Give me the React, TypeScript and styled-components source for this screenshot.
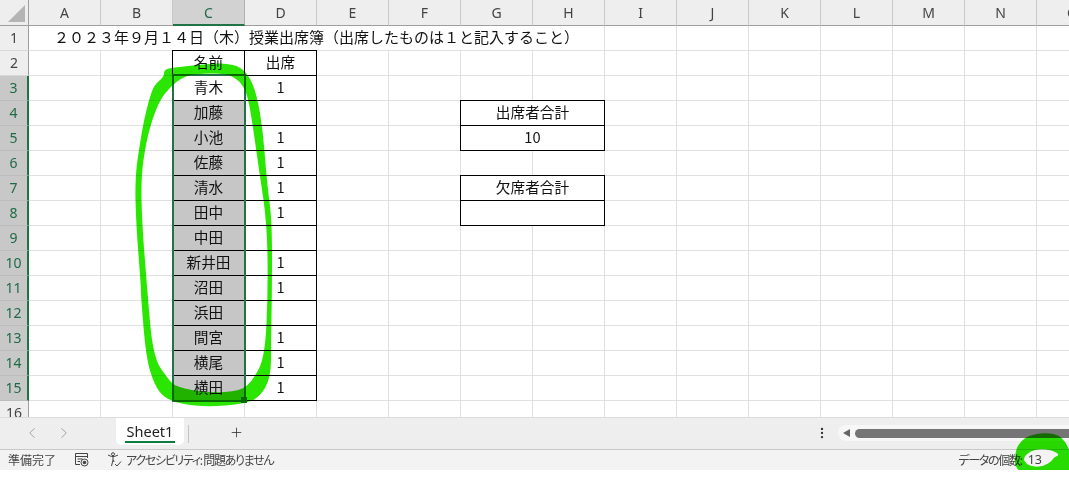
import React from 'react';
import { ChevronLeft, ChevronRight, EllipsisVertical, Plus } from 'lucide-react';
import styled, { createGlobalStyle } from 'styled-components';

const COLUMNS = 'ABCDEFGHIJKLMNO'.split('');
const ROWS = Array.from({ length: 16 }, (_, i) => i + 1);

// row number -> [name, attendance]
const ROSTER: Record<number, [string, string]> = {
  2: ['名前', '出席'],
  3: ['青木', '1'],
  4: ['加藤', ''],
  5: ['小池', '1'],
  6: ['佐藤', '1'],
  7: ['清水', '1'],
  8: ['田中', '1'],
  9: ['中田', ''],
  10: ['新井田', '1'],
  11: ['沼田', '1'],
  12: ['浜田', ''],
  13: ['間宮', '1'],
  14: ['横尾', '1'],
  15: ['横田', '1'],
};

// row number -> text of the merged G:H cell
const TOTALS: Record<number, string> = {
  4: '出席者合計',
  5: '10',
  7: '欠席者合計',
  8: '',
};

const TITLE =
  '２０２３年９月１４日（木）授業出席簿（出席したものは１と記入すること）';

type Point = [number, number];

// outline of the hand drawn circle, traced from the screenshot
const CIRCLE_OUTER: Point[] = [
  [164, 69], [178, 67], [208, 64], [225, 63], [241, 67], [251, 79], [258, 100],
  [263, 133], [266, 170], [268, 190], [272, 223], [272, 290], [271, 340],
  [271, 378], [259, 398], [242, 404], [208, 407], [182, 404], [164, 398],
  [154, 384], [146, 357], [141, 297], [141, 287], [136, 223], [135, 177],
  [140, 143], [144, 120], [149, 100], [154, 85], [164, 77],
];
const CIRCLE_INNER: Point[] = [
  [170, 87], [183, 77], [195, 74], [225, 73], [239, 80], [247, 93], [252, 120],
  [259, 170], [267, 223], [268, 290], [265, 357], [253, 380], [241, 391],
  [208, 393], [176, 387], [168, 379], [153, 357], [147, 287], [142, 223],
  [141, 177], [146, 143], [152, 120], [160, 100],
];
const BLOB_OUTER: Point[] = [
  [1015, 475], [1015, 450], [1022, 440], [1030, 435], [1043, 433], [1057, 434],
  [1066, 442], [1071, 455], [1071, 475],
];
const BLOB_INNER: Point[] = [
  [1023, 458], [1030, 451], [1040, 449], [1052, 450], [1060, 455], [1054, 457],
  [1052, 461], [1044, 466], [1034, 467], [1026, 464],
];

const smoothPath = (points: Point[]) => {
  const mid = (a: Point, b: Point) => `${(a[0] + b[0]) / 2} ${(a[1] + b[1]) / 2}`;
  const last = points[points.length - 1];
  let d = `M${mid(last, points[0])}`;
  points.forEach((p, i) => {
    d += ` Q${p[0]} ${p[1]} ${mid(p, points[(i + 1) % points.length])}`;
  });
  return `${d} Z`;
};

const Marker = () => (
  <MarkerLayer viewBox="0 0 1069 481">
    <defs>
      <clipPath id="status-edge">
        <rect x="0" y="0" width="1069" height="470" />
      </clipPath>
    </defs>
    <path
      fillRule="evenodd"
      fill="#2ae600"
      d={`${smoothPath(CIRCLE_OUTER)} ${smoothPath(CIRCLE_INNER)}`}
    />
    <path
      fillRule="evenodd"
      fill="#2ae600"
      clipPath="url(#status-edge)"
      d={`${smoothPath(BLOB_OUTER)} ${smoothPath(BLOB_INNER)}`}
    />
  </MarkerLayer>
);

const MacroIcon = () => (
  <StatusIcon width="15" height="15" viewBox="0 0 15 15">
    <path
      d="M6 12.5H1.5V1.5h12V6M1.5 4.5h12M3.5 7h5M3.5 9.5h2.500"
      fill="none"
      stroke="#444"
    />
    <circle cx="10.500" cy="10.500" r="3.500" fill="none" stroke="#444" />
    <circle cx="10.500" cy="10.500" r="1.800" fill="#444" />
  </StatusIcon>
);

const AccessibilityIcon = () => (
  <StatusIcon width="15" height="16" viewBox="0 0 15 16">
    <path
      d="M1 3l3.500 1.500h3L11 3M6 4.500V8L4.500 14M6.500 8l.5 2"
      fill="none"
      stroke="#444"
    />
    <circle cx="6" cy="2.200" r="1.500" fill="none" stroke="#444" />
    <path d="M8 12l2 2 4-4.500" fill="none" stroke="#444" />
  </StatusIcon>
);

const SheetRow = ({ row }: { row: number }) => {
  const isSelected = row >= 3 && row <= 15;

  if (row === 1) {
    return (
      <>
        <RowHeader $selected={false}>1</RowHeader>
        <TitleCell>{TITLE}</TitleCell>
        {COLUMNS.slice(8).map((col) => (
          <Cell key={col} />
        ))}
      </>
    );
  }

  return (
    <>
      <RowHeader $selected={isSelected}>{row}</RowHeader>
      {COLUMNS.map((col) => {
        if (col === 'C' || col === 'D') {
          const entry = ROSTER[row];
          const text = entry ? entry[col === 'C' ? 0 : 1] : '';
          return (
            <Cell
              key={col}
              $boxed={!!entry}
              $shaded={col === 'C' && row >= 4 && row <= 15}
            >
              {text}
            </Cell>
          );
        }
        if (col === 'G' && row in TOTALS) {
          return (
            <Cell key={col} $boxed $span={2}>
              {TOTALS[row]}
            </Cell>
          );
        }
        if (col === 'H' && row in TOTALS) return null;
        return <Cell key={col} />;
      })}
    </>
  );
};

export default function App() {
  return (
    <Page>
      <GlobalStyle />
      <Sheet>
        <Grid>
          <Corner>
            <CornerMark />
          </Corner>
          {COLUMNS.map((col) => (
            <ColumnHeader key={col} $selected={col === 'C'}>
              {col}
            </ColumnHeader>
          ))}
          {ROWS.map((row) => (
            <SheetRow key={row} row={row} />
          ))}
        </Grid>
        <Selection>
          <FillHandle />
        </Selection>
      </Sheet>
      <TabBar>
        <TabNav>
          <ChevronLeft size={18} strokeWidth={1.2} />
          <ChevronRight size={18} strokeWidth={1.2} />
        </TabNav>
        <ActiveTab>
          <TabLabel>Sheet1</TabLabel>
        </ActiveTab>
        <TabDivider />
        <AddSheet>
          <Plus size={15} strokeWidth={1.3} />
        </AddSheet>
        <ScrollArea>
          <EllipsisVertical size={14} color="#333" />
          <ScrollTrack>
            <ScrollArrow />
            <ScrollThumb />
          </ScrollTrack>
        </ScrollArea>
      </TabBar>
      <StatusBar>
        <span>準備完了</span>
        <MacroIcon />
        <AccessibilityItem>
          <AccessibilityIcon />
          <CondensedText>アクセシビリティ: 問題ありません</CondensedText>
        </AccessibilityItem>
        <StatusSummary>
          <CondensedText>データの個数:</CondensedText>
          <SummaryValue>13</SummaryValue>
        </StatusSummary>
      </StatusBar>
      <Marker />
    </Page>
  );
}

const GlobalStyle = createGlobalStyle`
  html, body {
    margin: 0;
    background: #fff;
    overflow: hidden;
  }
`;

const Page = styled.div`
  position: relative;
  width: 1069px;
  height: 481px;
  overflow: hidden;
  display: flex;
  flex-direction: column;
  font-family: 'Noto Sans CJK JP', 'Noto Sans', sans-serif;
  color: #111;
`;

const Sheet = styled.div`
  position: relative;
  height: 417px;
  overflow: hidden;
  flex: none;
`;

const Grid = styled.div`
  display: grid;
  width: 1109px;
  grid-template-columns: 29px repeat(15, 72px);
  grid-template-rows: 26px repeat(16, 25px);
`;

const Corner = styled.div`
  display: flex;
  align-items: flex-end;
  justify-content: flex-end;
  box-sizing: border-box;
  padding: 0 3px 3px 0;
  background: #eee;
  border-right: 1px solid #9e9e9e;
  border-bottom: 1px solid #9e9e9e;
`;

const CornerMark = styled.div`
  width: 17px;
  height: 17px;
  background: #b4b4b4;
  clip-path: polygon(100% 0, 100% 100%, 0 100%);
`;

const ColumnHeader = styled.div<{ $selected: boolean }>`
  display: flex;
  align-items: center;
  justify-content: center;
  box-sizing: border-box;
  font-family: 'Noto Sans', sans-serif;
  font-size: 14px;
  color: ${(p) => (p.$selected ? '#1d6b45' : '#444')};
  background: ${(p) => (p.$selected ? '#d2d2d2' : '#eee')};
  border-right: 1px solid ${(p) => (p.$selected ? '#b0b0b0' : '#c8c8c8')};
  border-bottom: ${(p) => (p.$selected ? '2px solid #217346' : '1px solid #9e9e9e')};
`;

const RowHeader = styled.div<{ $selected: boolean }>`
  display: flex;
  align-items: center;
  justify-content: center;
  box-sizing: border-box;
  padding-bottom: 2px;
  font-family: 'Noto Sans', sans-serif;
  font-size: 14px;
  color: ${(p) => (p.$selected ? '#1d6b45' : '#444')};
  background: ${(p) => (p.$selected ? '#c8c8c8' : '#eee')};
  border-bottom: 1px solid ${(p) => (p.$selected ? '#bcbcbc' : '#d8d8d8')};
  border-right: ${(p) => (p.$selected ? '2px solid #217346' : '1px solid #9e9e9e')};
`;

const Cell = styled.div<{ $boxed?: boolean; $shaded?: boolean; $span?: number }>`
  display: flex;
  align-items: center;
  justify-content: center;
  box-sizing: border-box;
  padding-bottom: 3px;
  font-size: 14.67px;
  grid-column: span ${(p) => p.$span ?? 1};
  background: ${(p) => (p.$shaded ? '#c6c6c6' : '#fff')};
  border-right: 1px solid ${(p) => (p.$boxed ? '#000' : '#e0e0e0')};
  border-bottom: 1px solid ${(p) => (p.$boxed ? '#000' : '#e0e0e0')};
  box-shadow: ${(p) => (p.$boxed ? '-1px 0 0 #000, 0 -1px 0 #000, -1px -1px 0 #000' : 'none')};
`;

const TitleCell = styled.div`
  display: flex;
  align-items: center;
  justify-content: center;
  box-sizing: border-box;
  padding-bottom: 4px;
  grid-column: span 8;
  font-size: 15px;
  white-space: nowrap;
  border-right: 1px solid #e0e0e0;
  border-bottom: 1px solid #e0e0e0;
`;

const Selection = styled.div`
  position: absolute;
  left: 172px;
  top: 74px;
  width: 74px;
  height: 328px;
  box-sizing: border-box;
  border: 2px solid #217346;
`;

const FillHandle = styled.div`
  position: absolute;
  right: -3px;
  bottom: -3px;
  width: 6px;
  height: 6px;
  background: #217346;
`;

const TabBar = styled.div`
  display: flex;
  align-items: flex-start;
  flex: none;
  height: 32px;
  background: #eee;
  border-top: 1px solid #dcdcdc;
  box-sizing: border-box;
`;

const TabNav = styled.div`
  display: flex;
  gap: 14px;
  width: 116px;
  box-sizing: border-box;
  padding: 6px 0 0 23px;
  color: #999;
`;

const ActiveTab = styled.div`
  display: flex;
  justify-content: center;
  width: 68px;
  height: 27px;
  box-sizing: border-box;
  background: #fff;
  border-radius: 0 0 5px 5px;
`;

const TabLabel = styled.div`
  height: 22px;
  padding: 0 2px;
  margin-top: 1px;
  font-family: 'Noto Sans', sans-serif;
  font-size: 14.500px;
  line-height: 24px;
  color: #222;
  border-bottom: 2px solid #107c41;
`;

const TabDivider = styled.div`
  width: 1px;
  height: 18px;
  margin: 7px 0 0 4px;
  background: #c4c4c4;
`;

const AddSheet = styled.div`
  display: flex;
  margin: 7px 0 0 40px;
  color: #333;
`;

const ScrollArea = styled.div`
  display: flex;
  align-items: center;
  gap: 9px;
  margin: 7px 0 0 auto;
  width: 254px;
  height: 16px;
`;

const ScrollTrack = styled.div`
  display: flex;
  align-items: center;
  flex: 1;
  height: 16px;
  padding-left: 5px;
  gap: 5px;
  background: #f7f7f7;
  border-radius: 8px 0 0 8px;
`;

const ScrollArrow = styled.div`
  width: 0;
  height: 0;
  border-top: 4px solid transparent;
  border-bottom: 4px solid transparent;
  border-right: 7px solid #666;
`;

const ScrollThumb = styled.div`
  flex: 1;
  height: 9px;
  background: #757575;
  border-radius: 5px 0 0 5px;
`;

const StatusBar = styled.div`
  display: flex;
  align-items: center;
  flex: none;
  height: 21px;
  box-sizing: border-box;
  padding: 0 0 1px 8px;
  background: #f3f3f3;
  border-top: 1px solid #c8c8c8;
  font-size: 12px;
  color: #444;
  white-space: nowrap;
  font-feature-settings: 'palt' 1;
`;

const StatusIcon = styled.svg`
  flex: none;
  margin-left: 18px;
`;

const AccessibilityItem = styled.div`
  display: flex;
  align-items: center;
  gap: 4px;
`;

const CondensedText = styled.span`
  letter-spacing: -1.300px;
`;

const StatusSummary = styled.div`
  display: flex;
  gap: 6px;
  margin-left: auto;
  padding-right: 27px;
`;

const SummaryValue = styled.span`
  font-family: 'Noto Sans', sans-serif;
  font-size: 12.500px;
`;

const MarkerLayer = styled.svg`
  position: absolute;
  left: 0;
  top: 0;
  width: 1069px;
  height: 481px;
  pointer-events: none;
  mix-blend-mode: multiply;
`;
